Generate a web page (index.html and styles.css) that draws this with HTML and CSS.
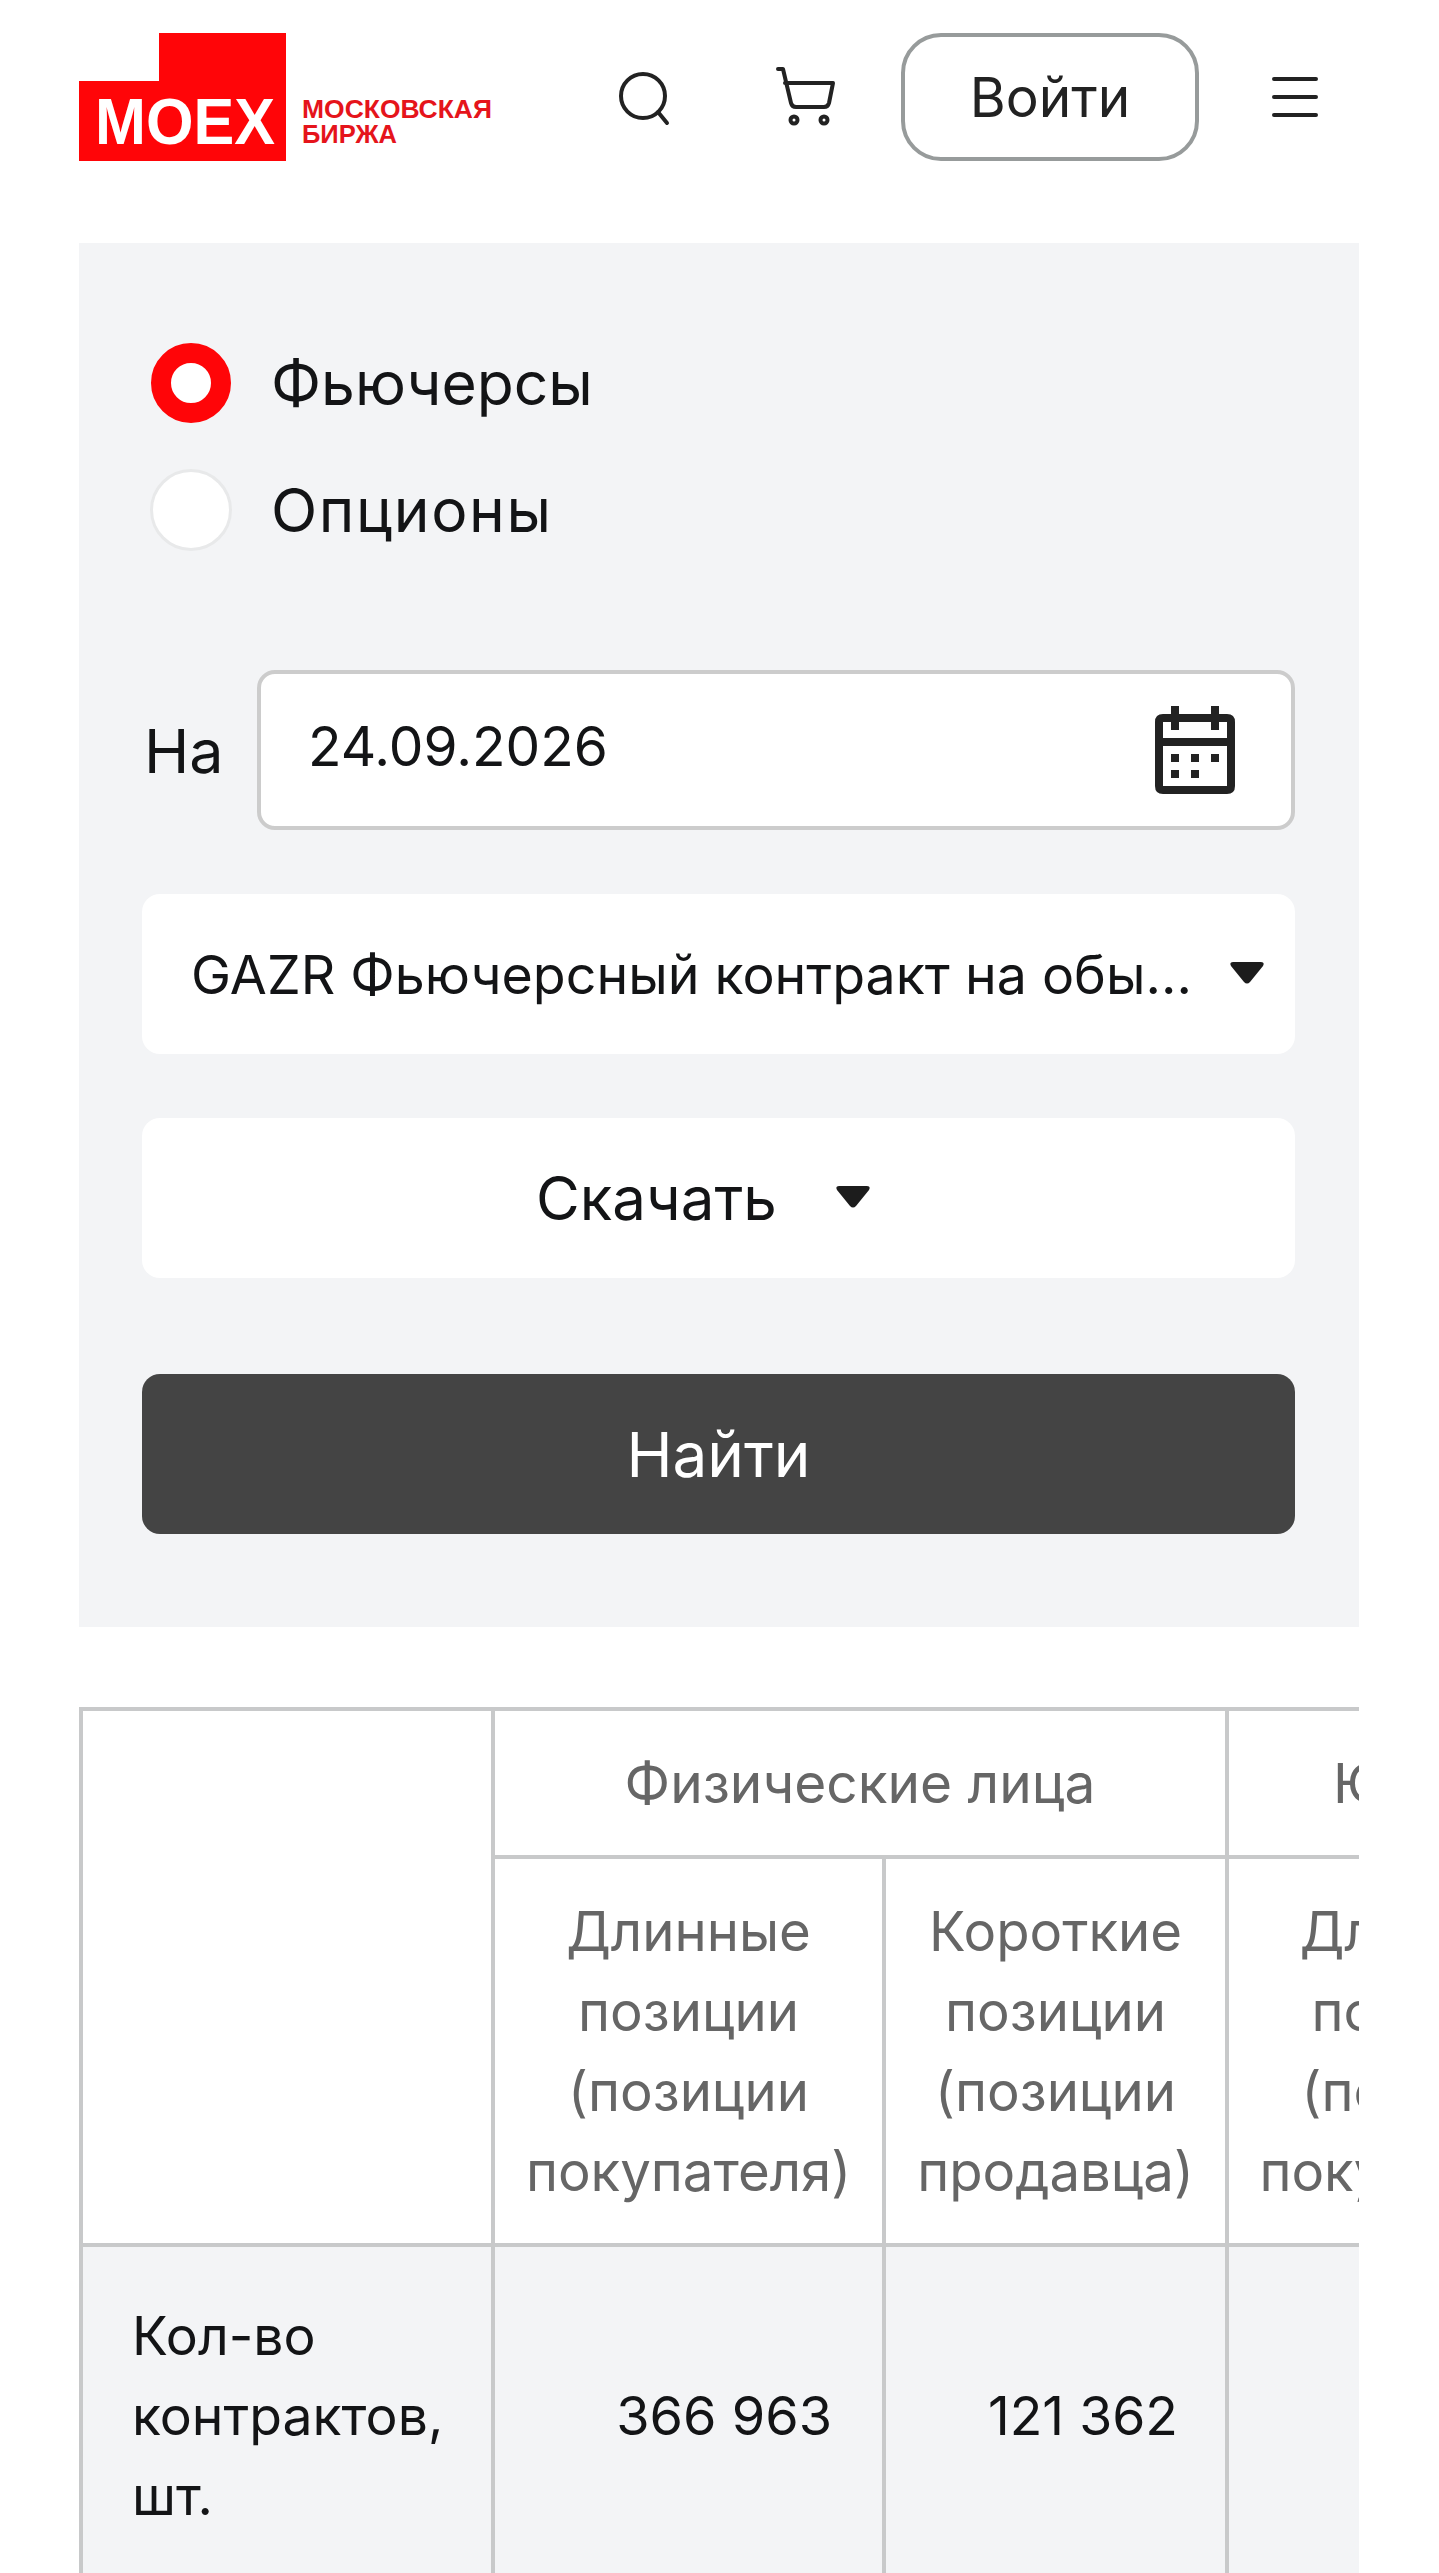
FILE: index.html
```html
<!DOCTYPE html>
<html lang="ru">
<head>
<meta charset="utf-8">
<title>MOEX</title>
<link rel="stylesheet" href="styles.css">
</head>
<body>
<div class="page">
  <header class="header">
    <svg class="logo" width="413" height="128" viewBox="0 0 413 128">
      <polygon points="80,0 207,0 207,128 0,128 0,48 80,48" fill="#ff0508"/>
      <text class="logo-moex" x="16" y="111" textLength="180" lengthAdjust="spacingAndGlyphs">MOEX</text>
      <text class="logo-name" x="223" y="85" textLength="190" lengthAdjust="spacingAndGlyphs">МОСКОВСКАЯ</text>
      <text class="logo-name" x="223" y="110" textLength="95" lengthAdjust="spacingAndGlyphs">БИРЖА</text>
    </svg>
    <svg class="icon-search" width="54" height="56" viewBox="0 0 54 56" fill="none" stroke="#222" stroke-width="4" stroke-linecap="round">
      <circle cx="25" cy="25" r="22"/>
      <path d="M40 41L49 52"/>
    </svg>
    <svg class="icon-cart" width="60" height="60" viewBox="0 0 60 60" fill="none" stroke="#222" stroke-width="4" stroke-linecap="round" stroke-linejoin="round">
      <path d="M2 3H7L15 37Q16 41 20 41H48Q52 41 53 37L57 17H9"/>
      <circle cx="18" cy="54" r="3.5"/>
      <circle cx="48" cy="54" r="3.5"/>
    </svg>
    <button class="login">Войти</button>
    <svg class="icon-menu" width="46" height="42" viewBox="0 0 46 42" fill="none" stroke="#222" stroke-width="4" stroke-linecap="round">
      <path d="M2 3H44M2 21H44M2 39H44"/>
    </svg>
  </header>

  <section class="panel">
    <div class="radios">
      <label class="radio"><span class="dot dot-on"></span><span>Фьючерсы</span></label>
      <label class="radio"><span class="dot dot-off"></span><span class="radio-wide">Опционы</span></label>
    </div>
    <div class="date-row">
      <span class="date-label">На</span>
      <div class="date-input">
        <span>24.09.2026</span>
        <svg width="80" height="88" viewBox="0 0 80 88" fill="#222">
          <path fill-rule="evenodd" d="M16 0H24V8H56V0H64V8H72Q80 8 80 16V80Q80 88 72 88H8Q0 88 0 80V16Q0 8 8 8H16ZM8 16V32H72V16H64V24H56V16H24V24H16V16ZM8 40V80H72V40Z"/>
          <path d="M16 48H24V56H16ZM36 48H44V56H36ZM56 48H64V56H56ZM16 64H24V72H16ZM36 64H44V72H36Z"/>
        </svg>
      </div>
    </div>
    <div class="select select-contract">
      <span class="select-text">GAZR Фьючерсный контракт на обы...</span>
      <svg class="caret" width="34" height="22" viewBox="0 0 34 22"><path d="M3 0H31Q35 0 33 4L20 20Q17 23 14 20L1 4Q-1 0 3 0Z" fill="#1c1c1c"/></svg>
    </div>
    <div class="select select-download">
      <span>Скачать</span>
      <svg class="caret" width="34" height="22" viewBox="0 0 34 22"><path d="M3 0H31Q35 0 33 4L20 20Q17 23 14 20L1 4Q-1 0 3 0Z" fill="#1c1c1c"/></svg>
    </div>
    <button class="find">Найти</button>
  </section>

  <div class="table-wrap">
    <table class="data">
      <colgroup><col class="c1"><col class="c2"><col class="c3"><col class="c4"><col class="c5"></colgroup>
      <tr class="r1">
        <th rowspan="2"></th>
        <th colspan="2">Физические лица</th>
        <th colspan="2">Юридические лица</th>
      </tr>
      <tr class="r2">
        <th>Длинные позиции (позиции покупателя)</th>
        <th>Короткие позиции (позиции продавца)</th>
        <th>Длинные позиции (позиции покупателя)</th>
        <th>Короткие позиции (позиции продавца)</th>
      </tr>
      <tr class="r3">
        <td class="name">Кол-во контрактов, шт.</td>
        <td>366 963</td>
        <td class="tight">121 362</td>
        <td></td>
        <td></td>
      </tr>
    </table>
  </div>
</div>
</body>
</html>
```
FILE: styles.css
```css
* { box-sizing: border-box; }
html, body { margin: 0; padding: 0; height: 2573px; overflow: hidden; background: #fff; }
body { font-family: Inter, "Noto Sans", sans-serif; color: #131416; }
.page { width: 1439px; padding: 33px 80px 0 79px; }

.header { position: relative; display: flex; align-items: center; height: 128px; }
.logo { flex: none; margin-right: 100px; }
.logo-moex { font: 700 64px "Liberation Sans", sans-serif; fill: #fff; }
.logo-name { font: 700 26px "Liberation Sans", sans-serif; fill: #e5141b; }
.icon-search { flex: none; margin: 3px 0 0 26px; }
.icon-cart { flex: none; margin: 0 0 2px 104px; }
.login { flex: none; width: 298px; height: 128px; margin-left: 65px; border: 4px solid #979b9b; border-radius: 40px; background: #fff; color: #222; font: 400 55px Inter, sans-serif; padding: 0; }
.icon-menu { flex: none; margin: 0 0 0 73px; }

.panel { margin-top: 82px; height: 1384px; background: #f3f4f6; padding: 100px 64px 0 63px; display: flex; flex-direction: column; }
.radios { display: flex; flex-direction: column; gap: 47px; margin-left: 9px; }
.radio { display: flex; align-items: center; gap: 40px; height: 80px; font-size: 60.5px; }
.radio-wide { letter-spacing: 1.6px; }
.dot { flex: none; width: 80px; height: 80px; border-radius: 50%; }
.dot-on { border: 20px solid #ff0508; background: #fff; }
.dot-off { width: 82px; height: 82px; margin-left: -1px; margin-right: -1px; border: 3px solid #e8e9ea; background: #fff; }

.date-row { display: flex; align-items: center; margin-top: 120px; gap: 29px; font-size: 61px; }
.date-label { flex: none; width: 86px; margin-top: 1px; padding-left: 2px; }
.date-input { flex: 1; height: 160px; display: flex; align-items: center; justify-content: space-between; padding: 0 56px 0 47px; background: #fff; border: 4px solid #ccc; border-radius: 18px; font-size: 55px; }
.date-input span { margin-top: -8px; }

.select { height: 160px; display: flex; align-items: center; background: #fff; border-radius: 18px; font-size: 53.7px; }
.select-contract { margin-top: 64px; padding: 0 31px 0 49px; justify-content: space-between; }
.select-text { white-space: nowrap; }
.select-download { margin-top: 64px; padding-left: 394px; font-size: 60px; gap: 59px; }
.caret { flex: none; margin-bottom: 2px; }
.find { margin-top: 96px; height: 160px; flex: none; border: 0; border-radius: 18px; background: #444; color: #fff; font: 400 62px Inter, sans-serif; padding: 0; }

.table-wrap { margin-top: 80px; overflow: hidden; }
.data { border-collapse: collapse; table-layout: fixed; width: 1880px; font-size: 55px; line-height: 80px; }
.c1 { width: 412px; } .c2 { width: 391px; } .c3 { width: 343px; } .c4 { width: 390px; } .c5 { width: 344px; }
.data th, .data td { border: 4px solid #c8c9ca; }
.data th { font-weight: 400; color: #666; text-align: center; padding: 0 30px; }
.r2 th { font-size: 54.5px; }
.r1 { height: 148px; }
.r2 { height: 388px; }
.r3 { height: 340px; background: #f3f4f6; }
.data td { text-align: right; padding: 1px 50px 0; font-size: 54px; }
.data td.tight { padding-right: 47px; font-size: 53.5px; }
.data td.name { text-align: left; padding: 1px 30px 0 49px; font-size: 53.5px; }
```
